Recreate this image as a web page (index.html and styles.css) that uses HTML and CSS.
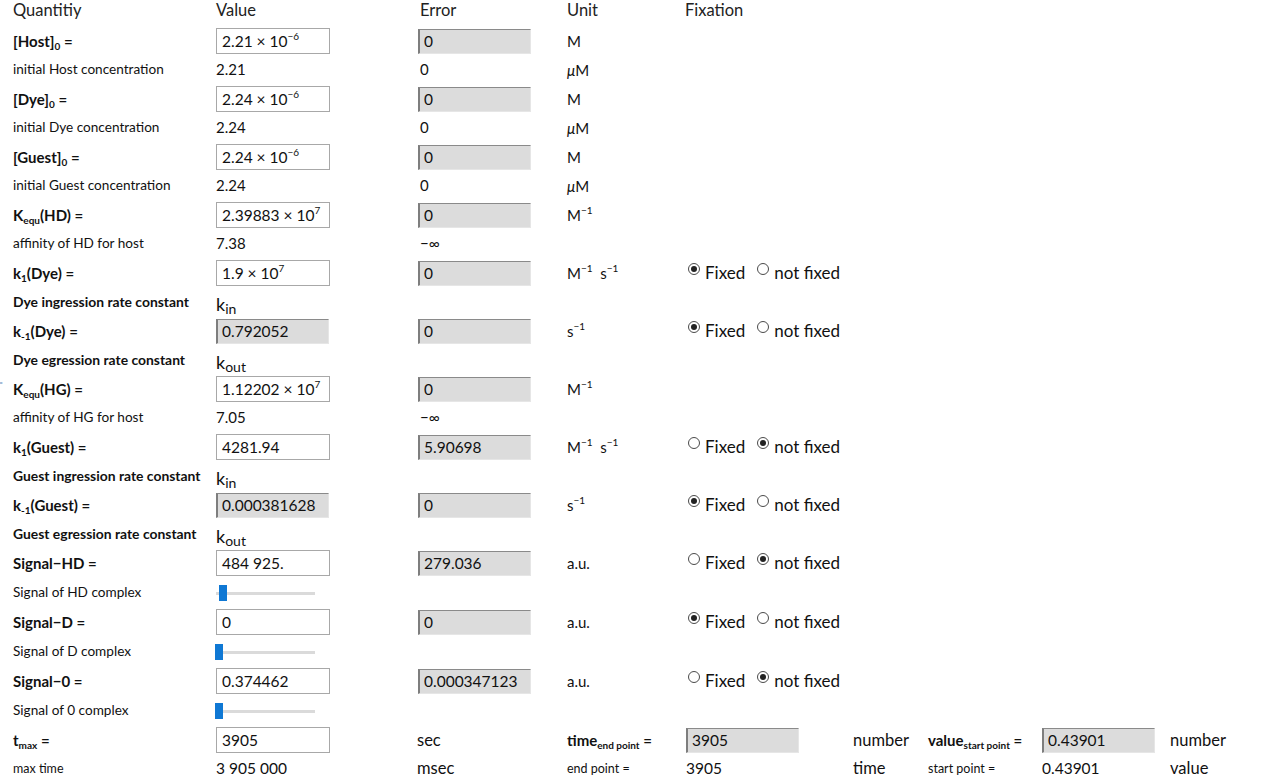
FILE: index.html
```html
<!DOCTYPE html>
<html>
<head>
<meta charset="utf-8">
<link rel="stylesheet" href="styles.css">
</head>
<body>
<div class="sheet">
  <div class="row head">
    <div>Quantitiy</div><div>Value</div><div>Error</div><div>Unit</div><div>Fixation</div>
  </div>

  <div class="row main">
    <div class="lbl">[Host]<sub>0</sub> =</div>
    <div><div class="field"><span>2.21 × 10<sup>−6</sup></span></div></div>
    <div><div class="field gray"><span>0</span></div></div>
    <div class="unit">M</div><div></div>
  </div>
  <div class="row sub">
    <div class="desc">initial Host concentration</div><div class="val">2.21</div><div class="err">0</div><div class="unit"><i>μ</i>M</div><div></div>
  </div>

  <div class="row main">
    <div class="lbl">[Dye]<sub>0</sub> =</div>
    <div><div class="field"><span>2.24 × 10<sup>−6</sup></span></div></div>
    <div><div class="field gray"><span>0</span></div></div>
    <div class="unit">M</div><div></div>
  </div>
  <div class="row sub">
    <div class="desc">initial Dye concentration</div><div class="val">2.24</div><div class="err">0</div><div class="unit"><i>μ</i>M</div><div></div>
  </div>

  <div class="row main">
    <div class="lbl">[Guest]<sub>0</sub> =</div>
    <div><div class="field"><span>2.24 × 10<sup>−6</sup></span></div></div>
    <div><div class="field gray"><span>0</span></div></div>
    <div class="unit">M</div><div></div>
  </div>
  <div class="row sub">
    <div class="desc">initial Guest concentration</div><div class="val">2.24</div><div class="err">0</div><div class="unit"><i>μ</i>M</div><div></div>
  </div>

  <div class="row main">
    <div class="lbl">K<sub>equ</sub>(HD) =</div>
    <div><div class="field"><span>2.39883 × 10<sup>7</sup></span></div></div>
    <div><div class="field gray"><span>0</span></div></div>
    <div class="unit">M<sup>−1</sup></div><div></div>
  </div>
  <div class="row sub">
    <div class="desc">affinity of HD for host</div><div class="val">7.38</div><div class="err">−∞</div><div></div><div></div>
  </div>

  <div class="row main">
    <div class="lbl">k<sub>1</sub>(Dye) =</div>
    <div><div class="field"><span>1.9 × 10<sup>7</sup></span></div></div>
    <div><div class="field gray"><span>0</span></div></div>
    <div class="unit">M<sup>−1</sup>&nbsp; s<sup>−1</sup></div>
    <div class="fix"><span class="radio on"></span><span class="opt">Fixed</span><span class="radio"></span><span>not fixed</span></div>
  </div>
  <div class="row sub">
    <div class="desc bold">Dye ingression rate constant</div><div class="kval">k<sub>in</sub></div><div></div><div></div><div></div>
  </div>

  <div class="row main">
    <div class="lbl">k<sub>-1</sub>(Dye) =</div>
    <div><div class="field gray"><span>0.792052</span></div></div>
    <div><div class="field gray"><span>0</span></div></div>
    <div class="unit">s<sup>−1</sup></div>
    <div class="fix"><span class="radio on"></span><span class="opt">Fixed</span><span class="radio"></span><span>not fixed</span></div>
  </div>
  <div class="row sub">
    <div class="desc bold">Dye egression rate constant</div><div class="kval">k<sub>out</sub></div><div></div><div></div><div></div>
  </div>

  <div class="row main">
    <div class="lbl"><span class="marker">⁼</span>K<sub>equ</sub>(HG) =</div>
    <div><div class="field"><span>1.12202 × 10<sup>7</sup></span></div></div>
    <div><div class="field gray"><span>0</span></div></div>
    <div class="unit">M<sup>−1</sup></div><div></div>
  </div>
  <div class="row sub">
    <div class="desc">affinity of HG for host</div><div class="val">7.05</div><div class="err">−∞</div><div></div><div></div>
  </div>

  <div class="row main">
    <div class="lbl">k<sub>1</sub>(Guest) =</div>
    <div><div class="field"><span>4281.94</span></div></div>
    <div><div class="field gray"><span>5.90698</span></div></div>
    <div class="unit">M<sup>−1</sup>&nbsp; s<sup>−1</sup></div>
    <div class="fix"><span class="radio"></span><span class="opt">Fixed</span><span class="radio on"></span><span>not fixed</span></div>
  </div>
  <div class="row sub">
    <div class="desc bold">Guest ingression rate constant</div><div class="kval">k<sub>in</sub></div><div></div><div></div><div></div>
  </div>

  <div class="row main">
    <div class="lbl">k<sub>-1</sub>(Guest) =</div>
    <div><div class="field gray"><span>0.000381628</span></div></div>
    <div><div class="field gray"><span>0</span></div></div>
    <div class="unit">s<sup>−1</sup></div>
    <div class="fix"><span class="radio on"></span><span class="opt">Fixed</span><span class="radio"></span><span>not fixed</span></div>
  </div>
  <div class="row sub">
    <div class="desc bold">Guest egression rate constant</div><div class="kval">k<sub>out</sub></div><div></div><div></div><div></div>
  </div>

  <div class="row main">
    <div class="lbl">Signal−HD =</div>
    <div><div class="field"><span>484 925.</span></div></div>
    <div><div class="field gray"><span>279.036</span></div></div>
    <div class="unit">a.u.</div>
    <div class="fix"><span class="radio"></span><span class="opt">Fixed</span><span class="radio on"></span><span>not fixed</span></div>
  </div>
  <div class="row sub slide">
    <div class="desc">Signal of HD complex</div><div><div class="slider"><span class="thumb shifted"></span></div></div><div></div><div></div><div></div>
  </div>

  <div class="row main">
    <div class="lbl">Signal−D =</div>
    <div><div class="field"><span>0</span></div></div>
    <div><div class="field gray"><span>0</span></div></div>
    <div class="unit">a.u.</div>
    <div class="fix"><span class="radio on"></span><span class="opt">Fixed</span><span class="radio"></span><span>not fixed</span></div>
  </div>
  <div class="row sub slide">
    <div class="desc">Signal of D complex</div><div><div class="slider"><span class="thumb"></span></div></div><div></div><div></div><div></div>
  </div>

  <div class="row main">
    <div class="lbl">Signal−0 =</div>
    <div><div class="field"><span>0.374462</span></div></div>
    <div><div class="field gray"><span>0.000347123</span></div></div>
    <div class="unit">a.u.</div>
    <div class="fix"><span class="radio"></span><span class="opt">Fixed</span><span class="radio on"></span><span>not fixed</span></div>
  </div>
  <div class="row sub slide">
    <div class="desc">Signal of 0 complex</div><div><div class="slider"><span class="thumb"></span></div></div><div></div><div></div><div></div>
  </div>

  <div class="brow main">
    <div class="lbl">t<sub>max</sub> =</div>
    <div><div class="field"><span>3905</span></div></div>
    <div class="unit">sec</div>
    <div class="lbl">time<sub>end point</sub> =</div>
    <div><div class="field gray"><span>3905</span></div></div>
    <div class="unit">number</div>
    <div class="lbl">value<sub>start point</sub> =</div>
    <div><div class="field gray"><span>0.43901</span></div></div>
    <div class="unit">number</div>
  </div>
  <div class="brow bsub">
    <div class="small">max time</div>
    <div class="val">3 905 000</div>
    <div class="unit">msec</div>
    <div class="small">end point =</div>
    <div class="val">3905</div>
    <div class="unit">time</div>
    <div class="small">start point =</div>
    <div class="val">0.43901</div>
    <div class="unit">value</div>
  </div>
</div>
</body>
</html>
```

FILE: styles.css
```css
html, body {
  margin: 0;
  padding: 0;
  background: #ffffff;
}
body {
  font-family: "Lato", "Noto Sans", sans-serif;
  color: #111111;
}
.sheet {
  padding-left: 13px;
  width: 1257px;
}
.row {
  display: grid;
  grid-template-columns: 203px 202px 149px 118px 1fr;
  align-items: center;
  white-space: nowrap;
}
.head {
  height: 26px;
  align-items: start;
  font-size: 16.5px;
  line-height: 20px;
  color: #222;
}
.head > div:nth-child(3) { padding-left: 2px; }
.main { height: 30px; }
.sub { height: 28px; }
.slide { height: 29px; }
.lbl {
  font-weight: 700;
  font-size: 15px;
  position: relative;
}
.lbl sub {
  font-size: 10px;
  vertical-align: -3px;
  line-height: 0;
}
.desc {
  font-size: 13.6px;
  padding-bottom: 2px;
}
.desc.bold { font-weight: 700; font-size: 13.9px; }
.val, .err {
  font-size: 15px;
  padding-bottom: 2px;
}
.err { padding-left: 2px; }
.kval {
  font-size: 18px;
  padding-top: 3px;
}
.kval sub {
  font-size: 14px;
  vertical-align: -3px;
  line-height: 0;
}
.unit {
  font-size: 15px;
}
.unit sup, .field sup {
  font-size: 10px;
  vertical-align: 7px;
  line-height: 0;
}
.unit i { font-style: italic; }
.field {
  box-sizing: border-box;
  width: 114px;
  height: 26px;
  border: 1px solid #a8a8a8;
  background: #ffffff;
  padding-left: 5px;
  font-size: 15.5px;
  display: flex;
  align-items: center;
  white-space: nowrap;
}
.field.gray {
  background: #dcdcdc;
  border-top: 1px solid #8a8a8a;
  border-left: 2px solid #7e7e7e;
  border-right: 1px solid #e6e6e6;
  border-bottom: 1px solid #e6e6e6;
  padding-left: 4px;
  width: 113px;
  height: 25px;
}
.fix {
  display: flex;
  align-items: center;
  font-size: 17px;
  padding-left: 3px;
  padding-bottom: 2px;
}
.radio {
  box-sizing: border-box;
  width: 12px;
  height: 12px;
  border: 1px solid #4a4a4a;
  border-radius: 50%;
  background: #ffffff;
  margin-right: 5px;
  margin-top: -7px;
  position: relative;
  flex: none;
}
.radio.on::after {
  content: "";
  position: absolute;
  left: 2px;
  top: 2px;
  width: 6px;
  height: 6px;
  border-radius: 50%;
  background: #222222;
}
.opt { margin-right: 12px; }
.slider {
  width: 99px;
  height: 3px;
  background: #dadada;
  position: relative;
  margin-top: 1px;
}
.thumb {
  position: absolute;
  left: -1px;
  top: -7px;
  width: 8px;
  height: 16px;
  background: #0f78d4;
}
.thumb.shifted { left: 3px; }
.marker {
  position: absolute;
  left: -14px;
  top: -1px;
  font-size: 12px;
  font-weight: 400;
  color: #5a88b8;
}
.brow {
  display: grid;
  grid-template-columns: 203px 201px 150px 119px 167px 75px 114px 128px 1fr;
  align-items: center;
  white-space: nowrap;
}
.bsub { height: 26px; }
.brow .lbl { font-size: 15px; }
.brow .unit { font-size: 16.5px; }
.brow .val { font-size: 15.5px; padding-bottom: 0; }
.small {
  font-size: 12.5px;
}
```
